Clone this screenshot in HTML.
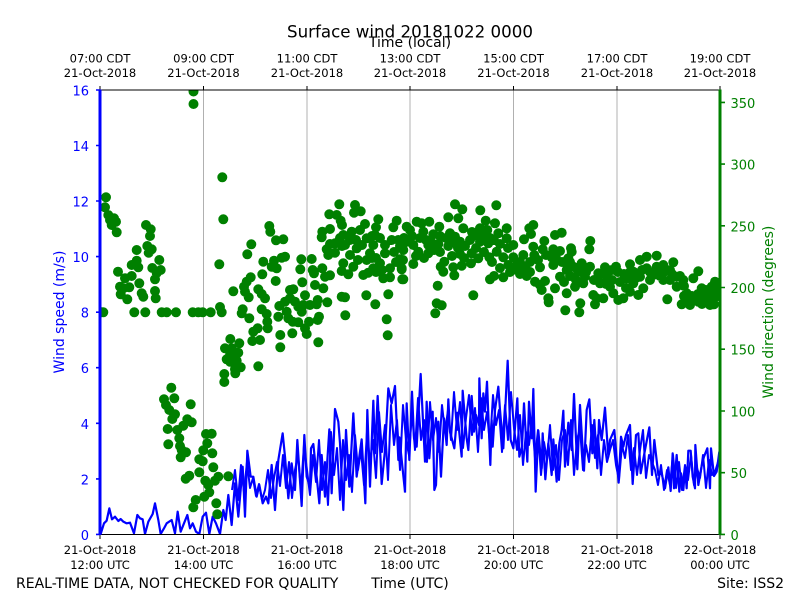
<!DOCTYPE html>
<html lang="en"><head><meta charset="utf-8"><title>Surface wind 20181022 0000</title>
<style>
html,body{margin:0;padding:0;background:#fff}
svg{display:block}
text{font-family:"DejaVu Sans","Liberation Sans",sans-serif;fill:#000}
.t{font-size:11.5px;text-anchor:middle}
.b{font-size:13px;fill:#0000ff;text-anchor:end}
.g{font-size:13px;fill:#008000}
.f{font-size:14px}
</style></head><body>
<svg width="800" height="600" viewBox="0 0 800 600" xmlns="http://www.w3.org/2000/svg">
<defs><clipPath id="c"><rect x="100" y="90" width="620" height="444.5"/></clipPath></defs>
<rect width="800" height="600" fill="#fff"/>
<path d="M203.5 90V534M307 90V534M410 90V534M513.5 90V534M617 90V534" stroke="#b0b0b0" stroke-width="1" fill="none"/>
<g clip-path="url(#c)">
<polyline transform="translate(90 360) scale(.33333)" fill="none" stroke="#0000ff" stroke-width="6.6" stroke-linejoin="round" points="32,522 42,490 50,482 58,445 66,478 75,470 85,483 92,477 100,485 110,490 120,488 132,520 142,465 150,475 158,478 165,522 175,485 188,462 195,430 205,480 212,522 222,505 230,490 245,480 255,520 263,455 272,515 282,490 292,465 300,505 308,490 318,515 328,522 338,470 348,458 358,522 368,470 378,490 390,522 400,450 407,480 415,405 425,495 435,370 445,470 458,320 465,470 472,272 482,350 490,350 500,410 508,375 518,430 528,410 535,430 545,315 555,450 565,300 578,220 585,290 595,415 605,310 615,390 622,240 635,438 643,225 650,350 660,380 663,265 670,252 680,350 688,430 695,285 705,410 718,208 725,400 735,147 745,185 750,250 760,450 768,210 778,380 790,160 800,350 815,238 826,430 832,150 840,380 850,122 855,280 863,108 875,372 885,270 895,85 905,130 915,78 925,300 928,232 945,395"/>
<polyline transform="translate(400 360) scale(.33333)" fill="none" stroke="#0000ff" stroke-width="6.6" stroke-linejoin="round" points="15,398 20,130 28,300 36,95 42,235 50,260 62,42 75,305 80,125 88,295 98,155 103,390 108,375 115,185 123,350 132,175 140,255 145,118 150,215 163,265 172,158 185,290 188,92 200,235 205,270 215,108 222,215 228,165 237,195 238,55 245,235 250,100 255,155 261,65 271,315 275,180 278,260 285,150 295,80 300,150 310,265 323,2 332,240 340,265 352,115 358,290 366,260 372,130 382,305 387,125 395,235 400,87 407,395 415,212 425,325 428,220 436,358 445,250 455,345 460,238 470,365 478,250 485,210 490,152 495,320 505,188 515,270 522,102 532,328 540,135 552,332 560,150 568,118 577,280 583,180 592,325 597,180 605,240 615,143 625,290 630,240 643,210 656,368 663,230 670,260 678,225 690,195 698,372 708,225 715,220 722,340 735,270 748,202 756,345 763,240 775,345 785,340 795,385 805,322 812,393 818,280 822,385 830,285 838,395 843,340 850,390 855,328 860,385 865,272 872,272 878,350 885,385 886,255 895,375 905,318 912,290 922,265 930,385 933,265 942,348 950,335 958,275"/>
<polyline fill="none" stroke="#0000ff" stroke-width="2" stroke-linejoin="round" points="232,490 235,470 238,500 241,465 244,492 247,462 250,488 253,478 256,496 259,484 262,500 265,490 268,470 271,498 274,478 277,462 280,486 283,455 286,488 289,462 292,498 295,470 298,455 301,490 304,445 307,470 310,495 313,455 316,482 319,440 322,490 325,462 328,505 331,432 334,475 337,448 340,500 343,440 346,480 349,455 352,492 355,435 358,470 361,450 364,485 367,432 370,462 373,440 376,478 379,412 382,452 385,425 388,480 391,405 394,445 397,420 400,470 403,405 406,440 409,455 412,412 415,450 418,398 421,440 424,420 427,462 430,402 433,440 436,418 439,452 442,405 445,432 448,410 451,440 454,392 457,430 460,402 463,448 466,418 469,395 472,435 475,408 478,452 481,398 484,430 487,412 490,445 493,395 496,425 499,410 502,452 505,405 508,440 511,392 514,428 517,450 520,415 523,465 526,432 529,445 532,420 535,458 538,430 541,475 544,442 547,460 550,425 553,470 556,445 559,480 562,440 565,430 568,465 571,420 574,475 577,440 580,428 583,470 586,445 589,462 592,425 595,458 598,435 601,475 604,440 607,462 610,450 613,440 616,465 619,480 622,445 625,458 628,435 631,470 634,448 637,475 640,450 643,430 646,478 649,455 652,462 655,470 658,485 661,465 664,490 667,470 670,485 673,455 676,488 679,462 682,490 685,465 688,480 691,455 694,485 697,468 700,478 703,455 706,488 709,460 712,475 715,472 718,462"/>
<path fill="none" stroke="#008000" stroke-width="10" stroke-linecap="round" d="M106 197.3h0M105 207.3h0M108.3 215h0M110 220h0M114 218.3h0M116 221.7h0M111.7 225h0M116.7 232.3h0M146 225h0M150.7 229.3h0M150 236h0M147.3 246h0M151.7 249.3h0M148.7 252.7h0M136.7 250h0M159.3 260h0M136.7 260.7h0M131.7 265h0M138.3 267.3h0M152.3 268h0M160.7 270h0M156.7 273h0M118 271.7h0M131.7 276h0M125 278.3h0M155 279.3h0M139.3 283.3h0M120 286.7h0M129.3 287.3h0M123.3 288.3h0M155 291h0M141.7 293.3h0M120.7 294.3h0M143.3 296.7h0M127.3 299.3h0M155.7 298.3h0M103.3 312.3h0M101.5 312.3h0M134.3 312.3h0M145.3 312.3h0M161.7 312.3h0M166.7 312.3h0M176 312.3h0M192.7 312.3h0M198.3 312.3h0M202.7 312.3h0M210.7 312.3h0M221.7 312.3h0M220 307h0
M193.5 91.5h0M193.5 104h0M222.3 177.3h0M223.3 219.3h0M219.3 264.3h0M269.3 226h0M270.3 231.7h0M276 240.3h0M283.3 239.3h0M251.3 244.3h0M247.3 254.3h0M285 256.7h0M281.7 257.7h0M263.3 261.7h0M274 260.7h0M271.7 266.7h0M276.7 268.3h0M262.3 274.3h0M275.7 281h0M250.7 277.3h0M246.7 281.7h0M244 286.7h0M233.3 291.3h0M245 291.7h0M258.3 289.3h0M261.7 294h0M265 298.3h0M248.7 297.3h0M242.7 309.3h0M241.7 313.3h0M261.7 309.3h0M266.7 314h0M249.3 318.3h0M267.3 321.7h0M267.7 328.3h0M257.7 328.3h0M253.3 331.7h0M260 340h0M252.3 341h0M280.3 335h0M280.3 347.3h0M230.3 339h0M239.3 343.3h0M225 348.3h0M231.7 348.3h0M238.3 352.7h0M230 355h0M233.3 353.3h0M226.7 359.3h0M236.7 360.7h0M230 361.7h0M240.7 367.3h0M235 369.3h0M224.3 374h0M235.3 373.3h0M224.3 382h0M258.3 366.3h0
M293.3 289.3h0M290 290h0M290 298.3h0M285 301.7h0M279.3 306h0M305 295.3h0M295 301.7h0M303.3 305h0M310 305h0M317.7 300h0M316.7 304.3h0M298.3 306.7h0M301.7 311.7h0M278.3 316.7h0M286.7 311.7h0M288.3 318.3h0M292.7 321.7h0M298.3 322.3h0M309 321.7h0M319 316.7h0M317.7 320h0M305 328.3h0M306.7 334h0M292.3 333.3h0M318.3 342.3h0M301.3 259.3h0M311.7 259h0M300.3 269.3h0M312.7 270h0M314 273.3h0M302.3 282.3h0M315 285h0M322.3 268.3h0M325 276.7h0M330 275.3h0M323.3 288.3h0M327.3 302.3h0M341.7 296.7h0M345 297.3h0M345.3 315.3h0M366.3 295.3h0M375.3 304.3h0M388.3 294.3h0M386.7 319.3h0M387.7 335.3h0
M339.3 204.3h0M329.3 214.3h0M336.7 215h0M340.7 220.7h0M355 205h0M354 212.7h0M360.7 211.3h0M378.3 219.3h0M376 227.3h0M396.7 220.7h0M393.3 227.3h0M406.7 226.7h0M330 229h0M322.3 231.7h0M321.7 237.3h0M343.3 235h0M351.7 231.7h0M365 224h0M360 230h0M366.7 238.3h0M335 243.3h0M326.7 249.3h0M335 252.7h0M328.3 255h0M356.7 248.3h0M350 255h0M373.3 245h0M385 245h0M391.7 240h0M398.3 240h0M406.7 241.7h0M370 253.3h0M385 253.3h0M400 259.3h0M366.7 260h0M343.3 263.3h0M353.3 266.7h0M380 263.3h0M373.3 268.3h0M341.7 271h0M348.3 274.3h0M363.3 275h0M368.3 272.7h0M390 268.3h0M401.7 269.3h0M383.3 278.3h0M390 277.3h0M402.3 279.3h0M340 238h0M345 245h0M375 235h0M362 245h0M376 258h0
M455 204.3h0M462.3 209.3h0M496.3 205.3h0M480.3 210.3h0M448.3 217.3h0M458.3 218.3h0M429.3 221.7h0M416.7 221.7h0M421.7 223.3h0M406.7 226.7h0M410 230h0M439.3 226.7h0M423.3 231.7h0M433.3 234.3h0M450 233.3h0M463.3 228.3h0M455 236.7h0M480 228.3h0M485.7 220.7h0M495 223.3h0M487.3 230h0M506.7 228.3h0M498.3 233.3h0M506.7 238.3h0M513.3 245h0M533.3 225h0M529.3 228.3h0M531 234h0M561.7 232.7h0M555 235h0M524 239.3h0M533.3 246.7h0M544.3 241h0M542.7 249.3h0M590.3 241h0M589.3 249.3h0M571 248.3h0M553.3 249.3h0M560 251h0
M406.7 241.7h0M413.3 245h0M403.3 250h0M418.3 251.7h0M428.3 253.3h0M428.3 245h0M438.3 244h0M448.3 246h0M460 241.7h0M470 240h0M480 241.7h0M488.3 243.3h0M460 254h0M471.7 253.3h0M478.3 258.3h0M471 263.3h0M489.3 257.3h0M496.7 251.7h0M503.3 257.3h0M513.3 257.3h0M523.3 255h0M534.3 255h0M551.7 257.3h0M553.3 265h0M568.3 258.3h0M571.7 251.7h0M516.7 265h0M525 266.7h0M508.3 265h0M540 267.3h0M565 261.7h0M581.7 263.3h0M590 266.7h0M573.3 266.7h0M578.3 271.7h0M566.7 270h0M560 276.7h0M585 276.7h0M583.3 283.3h0M575 286.7h0M566.7 293.3h0M555 288.3h0M548.3 298.3h0M548.7 302.3h0M540 285h0M535 281.7h0M545 281h0M541.7 290h0M516.7 270h0M526.7 276h0M503.3 277.3h0M490 279.3h0M494 276h0M403.3 279.3h0M413.3 264h0M403 260h0M401.7 268.3h0M444.3 261.7h0M440.7 266.7h0M443.3 271.7h0M453.3 267.3h0M454.3 275.3h0M461.7 265.7h0M437.7 285.7h0M473.3 295.3h0M436.7 303.3h0M441.7 305.3h0M435.3 313.3h0M565.3 310.3h0M579.3 312.3h0M580.3 303.3h0M595 304.3h0M596.7 298.3h0M593.3 295h0M603.3 298.3h0M598.3 273.3h0M605 267.3h0M616 266.7h0M606.7 276.7h0M600 283.3h0M610 286.7h0M613.3 293.3h0M618.3 300h0M623.3 298.3h0M626.7 278.3h0M630 264.3h0M640 260h0M646.7 256.7h0M656.7 255.7h0M673.3 262.3h0M698.3 271.3h0M693.3 278.3h0M633.3 271.7h0M646.7 268.3h0M656.7 266.7h0M663.3 265h0M670 270h0M640 276.7h0M653.3 275h0M663.3 280h0M676.7 276.7h0M683.3 280h0M676.7 286.7h0M633.3 283.3h0M643.3 288.3h0M638.3 295h0M630 291.7h0M667.3 299.3h0M686.7 293.3h0M681.7 304.3h0M690 305h0M690 298.3h0M701.7 288.3h0M698.3 301.7h0M705 300h0M715 281.7h0M711.7 286.7h0M708.3 295h0M715 295h0M710 305h0M714 304.3h0M718.3 283.3h0M716.7 290h0
M404 238h0M412 236h0M420 238h0M426 240h0M432 243h0M440 236h0M446 238h0M452 243h0M458 248h0M465 246h0M472 232h0M476 236h0M484 236h0M490 238h0M494 240h0M500 244h0M508 248h0M416 256h0M424 258h0M434 250h0M440 252h0M452 256h0M464 258h0M476 248h0M484 252h0M492 262h0M500 268h0M510 272h0M520 262h0M530 262h0M538 260h0M512 268h0M520 274h0M530 272h0M546 255h0M556 258h0M562 262h0M570 262h0M576 268h0M582 270h0M570 276h0M564 282h0M576 280h0M586 272h0M594 280h0M600 274h0M606 272h0M612 270h0M618 272h0M624 274h0M630 272h0M620 282h0M612 280h0M606 284h0M626 288h0M636 278h0M642 270h0M650 272h0M658 272h0M664 272h0M672 274h0M680 276h0M670 280h0M660 276h0M650 280h0M684 286h0M692 296h0M698 294h0M704 294h0M696 300h0M702 304h0M688 302h0M684 296h0M712 296h0M718 296h0M706 290h0M380 238h0M372 236h0M356 240h0M342 246h0M330 244h0M400 246h0M394 252h0M376 272h0M382 270h0M396 262h0M342 225h0M372 258h0M358 260h0M350 240h0
M171.3 387.7h0M164 399.3h0M174.3 398.3h0M166 405h0M169.3 410h0M175 414.3h0M172.3 419h0M190.7 404.3h0M187.3 419.3h0M191.7 422.3h0M183.3 425.7h0M167.7 429h0M177.3 430h0M179.3 438.3h0M168.3 444.3h0M180 446h0M186 452.3h0M180.7 457.3h0M181.7 450h0M206 434h0M211.7 433.7h0M207.3 443.3h0M203.3 450.3h0M212.3 453.3h0M199.3 459.3h0M202.7 461.3h0M213.3 467.3h0M199.3 472.3h0M189.3 475.7h0M185.7 478.7h0M205.3 480.7h0M218.3 476.7h0M228.3 476.3h0M215 480.7h0M208.3 485h0M209.3 492.3h0M204.3 496.7h0M195.7 500h0M193.3 507.3h0M216.3 503.3h0M217.3 514.3h0"/>
</g>
<path d="M100 90H720M100 534.5H720" stroke="#000" stroke-width="1.1" fill="none"/>
<path d="M100 86V90M203.5 86V90M307 86V90M410 86V90M513.5 86V90M617 86V90M720 86V90M100 534V539M203.5 534V539M307 534V539M410 534V539M513.5 534V539M617 534V539M720 534V539" stroke="#000" stroke-width="1" fill="none"/>
<path d="M100 89.5V535" stroke="#0000ff" stroke-width="3" fill="none"/>
<path d="M720 89.5V535" stroke="#008000" stroke-width="3" fill="none"/>
<path d="M96 90H100M96 145.5H100M96 201H100M96 256.6H100M96 312.2H100M96 367.7H100M96 423.3H100M96 478.9H100M96 534.4H100" stroke="#0000ff" stroke-width="1.6" fill="none"/>
<path d="M720 102.4H725M720 164.1H725M720 225.8H725M720 287.5H725M720 349.2H725M720 411H725M720 472.7H725M720 534.4H725" stroke="#008000" stroke-width="1.6" fill="none"/>
<text x="410" y="37.5" text-anchor="middle" style="font-size:16.67px">Surface wind 20181022 0000</text>
<text x="410" y="47" text-anchor="middle" class="f">Time (local)</text>
<g class="t">
<text class="t" x="100" y="62.3">07:00 CDT</text><text class="t" x="100" y="77">21-Oct-2018</text>
<text class="t" x="203.5" y="62.3">09:00 CDT</text><text class="t" x="203.5" y="77">21-Oct-2018</text>
<text class="t" x="307" y="62.3">11:00 CDT</text><text class="t" x="307" y="77">21-Oct-2018</text>
<text class="t" x="410" y="62.3">13:00 CDT</text><text class="t" x="410" y="77">21-Oct-2018</text>
<text class="t" x="513.5" y="62.3">15:00 CDT</text><text class="t" x="513.5" y="77">21-Oct-2018</text>
<text class="t" x="617" y="62.3">17:00 CDT</text><text class="t" x="617" y="77">21-Oct-2018</text>
<text class="t" x="720" y="62.3">19:00 CDT</text><text class="t" x="720" y="77">21-Oct-2018</text>
<text class="t" x="100" y="554">21-Oct-2018</text><text class="t" x="100" y="569">12:00 UTC</text>
<text class="t" x="203.5" y="554">21-Oct-2018</text><text class="t" x="203.5" y="569">14:00 UTC</text>
<text class="t" x="307" y="554">21-Oct-2018</text><text class="t" x="307" y="569">16:00 UTC</text>
<text class="t" x="410" y="554">21-Oct-2018</text><text class="t" x="410" y="569">18:00 UTC</text>
<text class="t" x="513.5" y="554">21-Oct-2018</text><text class="t" x="513.5" y="569">20:00 UTC</text>
<text class="t" x="617" y="554">21-Oct-2018</text><text class="t" x="617" y="569">22:00 UTC</text>
<text class="t" x="720" y="554">22-Oct-2018</text><text class="t" x="720" y="569">00:00 UTC</text>
</g>
<text class="b" x="89" y="95.5">16</text><text class="b" x="89" y="151">14</text><text class="b" x="89" y="206.5">12</text><text class="b" x="89" y="262">10</text><text class="b" x="89" y="317.7">8</text><text class="b" x="89" y="373.2">6</text><text class="b" x="89" y="428.8">4</text><text class="b" x="89" y="484.4">2</text><text class="b" x="89" y="539.9">0</text>
<text class="g" x="730.5" y="107.9">350</text><text class="g" x="730.5" y="169.6">300</text><text class="g" x="730.5" y="231.3">250</text><text class="g" x="730.5" y="293">200</text><text class="g" x="730.5" y="354.7">150</text><text class="g" x="730.5" y="416.5">100</text><text class="g" x="730.5" y="478.2">50</text><text class="g" x="730.5" y="539.9">0</text>
<text transform="translate(64 312) rotate(-90)" text-anchor="middle" class="f" style="fill:#0000ff">Wind speed (m/s)</text>
<text transform="translate(773 312) rotate(-90)" text-anchor="middle" class="f" style="fill:#008000">Wind direction (degrees)</text>
<text x="16" y="588" class="f">REAL-TIME DATA, NOT CHECKED FOR QUALITY</text>
<text x="410" y="588" text-anchor="middle" class="f">Time (UTC)</text>
<text x="784" y="588" text-anchor="end" class="f">Site: ISS2</text>
</svg>
</body></html>
